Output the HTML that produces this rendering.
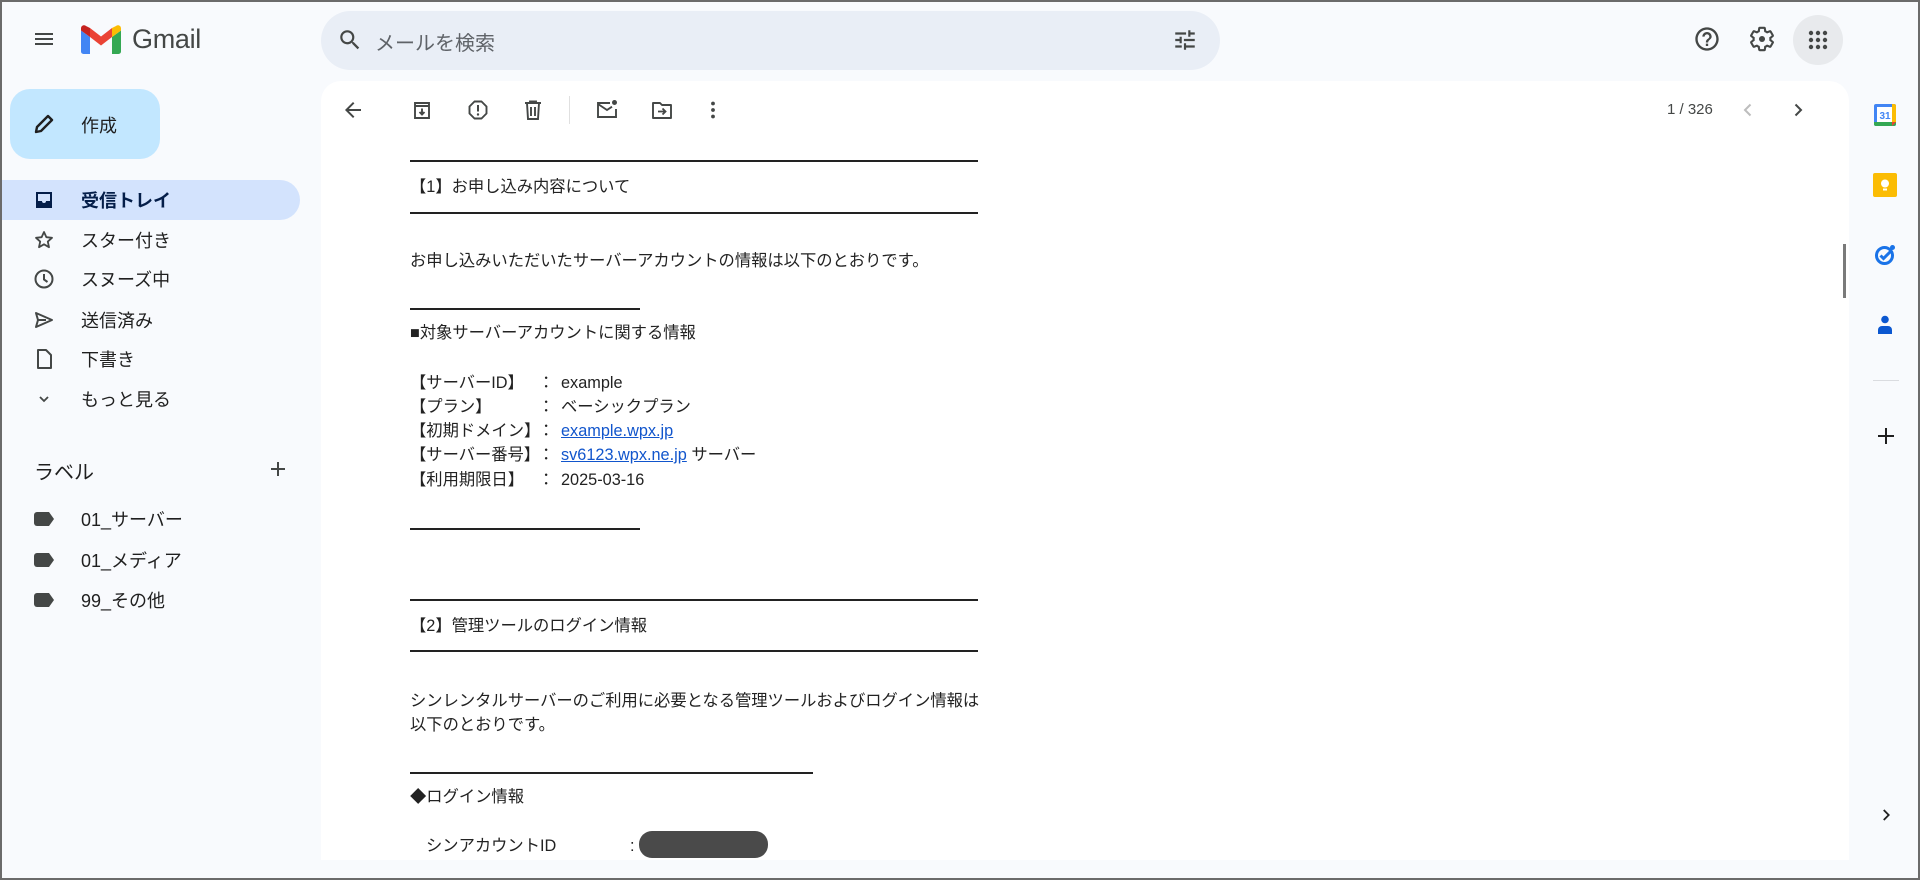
<!DOCTYPE html>
<html><head><meta charset="utf-8"><style>
*{margin:0;padding:0;box-sizing:border-box}
body{width:1920px;height:880px;background:#f8fafd;font-family:"Liberation Sans","Noto Sans CJK JP",sans-serif;color:#1f1f1f;position:relative;overflow:hidden}
.frame{position:absolute;inset:0;border:2px solid #6b6b6b;z-index:10;pointer-events:none}
.a{position:absolute}
.nav{position:absolute;left:0;width:300px;height:40px;display:flex;align-items:center;font-size:18px;color:#1f1f1f}
.nav svg{position:absolute;left:32px}
.nav span{position:absolute;left:81px;white-space:nowrap}
.lab{position:absolute;left:0;width:300px;height:40px;display:flex;align-items:center;font-size:18px}
.lab i{position:absolute;left:34px;width:20px;height:14px;background:#444746;border-radius:3px;clip-path:polygon(0 0,75% 0,100% 50%,75% 100%,0 100%)}
.lab span{position:absolute;left:81px;white-space:nowrap}
.mail{position:absolute;left:410px;font-size:16.3px;color:#222;white-space:nowrap;line-height:20px}
.rule{position:absolute;left:410px;height:2px;background:#222}
.tb{position:absolute;top:98px}
a{color:#1155cc;text-decoration:underline}
</style></head><body>
<div class="frame"></div>

<svg class="a" style="left:32px;top:27px" width="24" height="24" viewBox="0 0 24 24"><path d="M3 18h18v-2H3v2zm0-5h18v-2H3v2zm0-7v2h18V6H3z" fill="#444746"/></svg>
<svg class="a" style="left:81px;top:25px" width="40" height="30" viewBox="0 0 40 30">
<path d="M0 5.5v21A2.5 2.5 0 0 0 2.5 29H9V12z" fill="#4285f4"/>
<path d="M31 29h6.5a2.5 2.5 0 0 0 2.5-2.5v-21L31 12z" fill="#34a853"/>
<path d="M31 3v9l9-6.5V3.5C40 0.5 37 -0.5 35 1z" fill="#fbbc04"/>
<path d="M9 12V3l11 8.5L31 3v9L20 20.5z" fill="#ea4335"/>
<path d="M0 3.5v2L9 12V3L5 1C3-0.5 0 0.5 0 3.5z" fill="#c5221f"/>
</svg>
<div class="a" style="left:132px;top:24px;font-size:27px;color:#444746;letter-spacing:-0.3px">Gmail</div>

<div class="a" style="left:321px;top:11px;width:899px;height:59px;background:#e9eef6;border-radius:30px"></div>
<svg class="a" style="left:337px;top:27px" width="26" height="26" viewBox="0 0 24 24"><path d="M15.5 14h-.79l-.28-.27A6.47 6.47 0 0 0 16 9.5 6.5 6.5 0 1 0 9.5 16c1.61 0 3.09-.59 4.23-1.57l.27.28v.79l5 4.99L20.49 19l-4.99-5zm-6 0C7.01 14 5 11.99 5 9.5S7.01 5 9.5 5 14 7.01 14 9.5 11.99 14 9.5 14z" fill="#444746"/></svg>
<div class="a" style="left:375px;top:27px;font-size:20px;color:#5f6368">メールを検索</div>
<svg class="a" style="left:1172px;top:27px" width="26" height="26" viewBox="0 0 24 24"><path d="M3 17v2h6v-2H3zM3 5v2h10V5H3zm10 16v-2h8v-2h-8v-2h-2v6h2zM7 9v2H3v2h4v2h2V9H7zm14 4v-2H11v2h10zm-6-4h2V7h4V5h-4V3h-2v6z" fill="#444746"/></svg>

<svg class="a" style="left:1693px;top:25px" width="28" height="28" viewBox="0 0 24 24"><path d="M11 18h2v-2h-2v2zm1-16C6.48 2 2 6.48 2 12s4.48 10 10 10 10-4.48 10-10S17.52 2 12 2zm0 18c-4.41 0-8-3.59-8-8s3.59-8 8-8 8 3.59 8 8-3.59 8-8 8zm0-14c-2.21 0-4 1.79-4 4h2c0-1.1.9-2 2-2s2 .9 2 2c0 2-3 1.75-3 5h2c0-2.25 3-2.5 3-5 0-2.21-1.79-4-4-4z" fill="#444746"/></svg>
<svg class="a" style="left:1748px;top:25px" width="28" height="28" viewBox="0 0 24 24"><path d="M19.14 12.94c.04-.3.06-.61.06-.94 0-.32-.02-.64-.07-.94l2.03-1.58a.49.49 0 0 0 .12-.61l-1.92-3.32a.49.49 0 0 0-.59-.22l-2.39.96c-.5-.38-1.030-.7-1.62-.94l-.36-2.54a.48.48 0 0 0-.48-.41h-3.84c-.24 0-.43.17-.47.41l-.36 2.54c-.59.24-1.13.57-1.62.94l-2.39-.96a.48.48 0 0 0-.59.22L2.74 8.87c-.12.21-.08.47.12.61l2.03 1.58c-.05.3-.09.63-.09.94s.02.64.07.94l-2.03 1.58a.49.49 0 0 0-.12.61l1.92 3.32c.12.22.37.29.59.22l2.39-.96c.5.38 1.03.7 1.62.94l.36 2.54c.05.24.24.41.48.41h3.84c.24 0 .44-.17.47-.41l.36-2.54c.59-.24 1.13-.56 1.62-.94l2.39.96c.22.08.47 0 .59-.22l1.92-3.32c.12-.22.07-.47-.12-.61l-2.01-1.58z" fill="none" stroke="#444746" stroke-width="1.8"/><circle cx="12" cy="12" r="2.6" fill="#444746"/></svg>
<div class="a" style="left:1793px;top:15px;width:50px;height:50px;border-radius:50%;background:#e8eaed"></div>
<svg class="a" style="left:1806px;top:28px" width="24" height="24" viewBox="0 0 24 24" fill="#444746"><circle cx="5" cy="5" r="2.2"/><circle cx="12" cy="5" r="2.2"/><circle cx="19" cy="5" r="2.2"/><circle cx="5" cy="12" r="2.2"/><circle cx="12" cy="12" r="2.2"/><circle cx="19" cy="12" r="2.2"/><circle cx="5" cy="19" r="2.2"/><circle cx="12" cy="19" r="2.2"/><circle cx="19" cy="19" r="2.2"/></svg>

<div class="a" style="left:10px;top:89px;width:150px;height:70px;background:#c2e7ff;border-radius:20px"></div>
<svg class="a" style="left:32px;top:112px" width="24" height="24" viewBox="0 0 24 24"><path d="M4 20l1-5L16 4l4 4L9 19z" fill="none" stroke="#1f1f1f" stroke-width="2.4" stroke-linejoin="round"/></svg>
<div class="a" style="left:81px;top:112px;font-size:18px">作成</div>

<div class="a" style="left:0;top:180px;width:300px;height:40px;background:#d3e3fd;border-radius:0 20px 20px 0"></div>
<div class="nav" style="top:180px;font-weight:bold;color:#041e49"><svg width="24" height="24" viewBox="0 0 24 24"><path d="M4 4h16v16H4z" fill="#041e49"/><path d="M6 6h12v7h-4a2 2 0 0 1-4 0H6z" fill="#d3e3fd"/></svg><span>受信トレイ</span></div>
<div class="nav" style="top:220px"><svg width="24" height="24" viewBox="0 0 24 24"><path d="M12 4l2.4 5.2 5.6.6-4.2 3.8 1.2 5.6L12 16.3 7 19.2l1.2-5.6L4 9.8l5.6-.6z" fill="none" stroke="#444746" stroke-width="1.8" stroke-linejoin="round"/></svg><span>スター付き</span></div>
<div class="nav" style="top:259px"><svg width="24" height="24" viewBox="0 0 24 24"><circle cx="12" cy="12" r="8.5" fill="none" stroke="#444746" stroke-width="2"/><path d="M12 7v5.5l3.5 2.5" fill="none" stroke="#444746" stroke-width="2"/></svg><span>スヌーズ中</span></div>
<div class="nav" style="top:300px"><svg width="24" height="24" viewBox="0 0 24 24"><path d="M4 5l16 7-16 7 2-7z M6 12h8" fill="none" stroke="#444746" stroke-width="2" stroke-linejoin="round"/></svg><span>送信済み</span></div>
<div class="nav" style="top:339px"><svg width="24" height="24" viewBox="0 0 24 24"><path d="M6 3h8l5 5v13H6z" fill="none" stroke="#444746" stroke-width="2" stroke-linejoin="round"/></svg><span>下書き</span></div>
<div class="nav" style="top:379px"><svg width="24" height="24" viewBox="0 0 24 24"><path d="M8 10l4 4 4-4" fill="none" stroke="#444746" stroke-width="1.8"/></svg><span>もっと見る</span></div>

<div class="a" style="left:34px;top:456px;font-size:20px">ラベル</div>
<svg class="a" style="left:268px;top:459px" width="20" height="20" viewBox="0 0 20 20"><path d="M10 3v14M3 10h14" stroke="#444746" stroke-width="2"/></svg>
<div class="lab" style="top:499px"><i></i><span>01_サーバー</span></div>
<div class="lab" style="top:540px"><i></i><span>01_メディア</span></div>
<div class="lab" style="top:580px"><i></i><span>99_その他</span></div>

<div class="a" style="left:321px;top:81px;width:1528px;height:779px;background:#fff;border-radius:20px 20px 0 0"></div>
<svg class="tb" style="left:341px" width="24" height="24" viewBox="0 0 24 24"><path d="M20 11H7.8l5.6-5.6L12 4l-8 8 8 8 1.4-1.4L7.8 13H20z" fill="#444746"/></svg>
<svg class="tb" style="left:410px" width="24" height="24" viewBox="0 0 24 24"><path d="M5 5h14v15H5zM5 8h14M12 10.5v6M9.5 14l2.5 2.5 2.5-2.5" fill="none" stroke="#444746" stroke-width="1.9"/></svg>
<svg class="tb" style="left:466px" width="24" height="24" viewBox="0 0 24 24"><path d="M8.5 3.5h7l5 5v7l-5 5h-7l-5-5v-7z" fill="none" stroke="#444746" stroke-width="1.9" stroke-linejoin="round"/><path d="M12 7v6.5" stroke="#444746" stroke-width="2"/><circle cx="12" cy="16.5" r="1.2" fill="#444746"/></svg>
<svg class="tb" style="left:521px" width="24" height="24" viewBox="0 0 24 24"><path d="M4 5h16M9 5V3.5h6V5M6 5l1 16h10l1-16M10 9v9M14 9v9" fill="none" stroke="#444746" stroke-width="1.9"/></svg>
<div class="a" style="left:569px;top:96px;width:1px;height:28px;background:#e0e0e0"></div>
<svg class="tb" style="left:595px" width="24" height="24" viewBox="0 0 24 24"><path d="M15 5H3v14h18v-8M3 6l9 6 5-3.3" fill="none" stroke="#444746" stroke-width="1.9"/><circle cx="19.5" cy="4.5" r="2.5" fill="#444746"/></svg>
<svg class="tb" style="left:650px" width="24" height="24" viewBox="0 0 24 24"><path d="M3 5h7l2 2h9v13H3z" fill="none" stroke="#444746" stroke-width="1.9" stroke-linejoin="round"/><path d="M8 13.5h7M12.5 10.5l3 3-3 3" fill="none" stroke="#444746" stroke-width="1.8"/></svg>
<svg class="tb" style="left:701px" width="24" height="24" viewBox="0 0 24 24" fill="#444746"><circle cx="12" cy="5.5" r="1.9"/><circle cx="12" cy="12" r="1.9"/><circle cx="12" cy="18.5" r="1.9"/></svg>

<div class="a" style="left:1667px;top:101px;font-size:15px;color:#444746">1 / 326</div>
<svg class="a" style="left:1738px;top:100px" width="20" height="20" viewBox="0 0 20 20"><path d="M12.5 4.5L7 10l5.5 5.5" fill="none" stroke="#bdbdbd" stroke-width="2"/></svg>
<svg class="a" style="left:1788px;top:100px" width="20" height="20" viewBox="0 0 20 20"><path d="M7.5 4.5L13 10l-5.5 5.5" fill="none" stroke="#444746" stroke-width="2"/></svg>
<div class="a" style="left:1843px;top:244px;width:3px;height:54px;background:#7a7a7a"></div>

<div class="rule" style="top:160px;width:568px"></div>
<div class="mail" style="top:177px">【1】お申し込み内容について</div>
<div class="rule" style="top:212px;width:568px"></div>
<div class="mail" style="top:251px">お申し込みいただいたサーバーアカウントの情報は以下のとおりです。</div>
<div class="rule" style="top:308px;width:230px"></div>
<div class="mail" style="top:323px">■対象サーバーアカウントに関する情報</div>
<div class="mail" style="top:373px">【サーバーID】</div><div class="mail" style="top:373px;left:538px">：</div><div class="mail" style="top:373px;left:561px">example</div>
<div class="mail" style="top:397px">【プラン】</div><div class="mail" style="top:397px;left:538px">：</div><div class="mail" style="top:397px;left:561px">ベーシックプラン</div>
<div class="mail" style="top:421px">【初期ドメイン】</div><div class="mail" style="top:421px;left:538px">：</div><div class="mail" style="top:421px;left:561px"><a>example.wpx.jp</a></div>
<div class="mail" style="top:445px">【サーバー番号】</div><div class="mail" style="top:445px;left:538px">：</div><div class="mail" style="top:445px;left:561px"><a>sv6123.wpx.ne.jp</a> サーバー</div>
<div class="mail" style="top:470px">【利用期限日】</div><div class="mail" style="top:470px;left:538px">：</div><div class="mail" style="top:470px;left:561px">2025-03-16</div>
<div class="rule" style="top:528px;width:230px"></div>
<div class="rule" style="top:599px;width:568px"></div>
<div class="mail" style="top:616px">【2】管理ツールのログイン情報</div>
<div class="rule" style="top:650px;width:568px"></div>
<div class="mail" style="top:691px">シンレンタルサーバーのご利用に必要となる管理ツールおよびログイン情報は</div>
<div class="mail" style="top:715px">以下のとおりです。</div>
<div class="rule" style="top:772px;width:403px"></div>
<div class="mail" style="top:787px">◆ログイン情報</div>
<div class="mail" style="top:836px;left:426px">シンアカウントID</div>
<div class="mail" style="top:836px;left:630px">:</div>
<div class="a" style="left:639px;top:831px;width:129px;height:27px;border-radius:13px;background:#4a4a4a"></div>

<svg class="a" style="left:1873px;top:103px" width="24" height="24" viewBox="0 0 24 24"><rect x="1" y="1" width="22" height="22" rx="2" fill="#4285f4"/><rect x="4" y="4" width="16" height="16" fill="#fff"/><path d="M1 19h22v2a2 2 0 0 1-2 2H3a2 2 0 0 1-2-2z" fill="#34a853"/><path d="M19 1h2a2 2 0 0 1 2 2v16h-4z" fill="#fbbc04"/><path d="M19 19h4l-4 4z" fill="#ea4335"/><text x="12" y="16" font-size="10" font-family="Liberation Sans" font-weight="bold" fill="#4285f4" text-anchor="middle">31</text></svg>
<div class="a" style="left:1873px;top:173px;width:24px;height:24px;background:#fbbc04;border-radius:2px"></div>
<svg class="a" style="left:1873px;top:173px" width="24" height="24" viewBox="0 0 24 24"><circle cx="12" cy="10.5" r="4" fill="#fff"/><rect x="10" y="15.5" width="4" height="2" fill="#fff"/></svg>
<svg class="a" style="left:1873px;top:243px" width="24" height="24" viewBox="0 0 24 24"><circle cx="11.5" cy="12.5" r="8" fill="none" stroke="#1a73e8" stroke-width="3"/><path d="M7.5 12.5l3 3 7-7" fill="none" stroke="#1a73e8" stroke-width="3"/><circle cx="19.5" cy="4.5" r="2.5" fill="#1a73e8"/></svg>
<svg class="a" style="left:1873px;top:313px" width="24" height="24" viewBox="0 0 24 24"><circle cx="12" cy="6.5" r="3.8" fill="#0b57d0"/><path d="M5 21v-4a4 4 0 0 1 4-4h6a4 4 0 0 1 4 4v4z" fill="#0b57d0"/></svg>
<div class="a" style="left:1873px;top:380px;width:26px;height:1px;background:#dadce0"></div>
<svg class="a" style="left:1874px;top:424px" width="24" height="24" viewBox="0 0 24 24"><path d="M12 4v16M4 12h16" stroke="#1f1f1f" stroke-width="2"/></svg>
<svg class="a" style="left:1877px;top:806px" width="18" height="18" viewBox="0 0 20 20"><path d="M7.5 4.5L13 10l-5.5 5.5" fill="none" stroke="#1f1f1f" stroke-width="2"/></svg>
</body></html>
